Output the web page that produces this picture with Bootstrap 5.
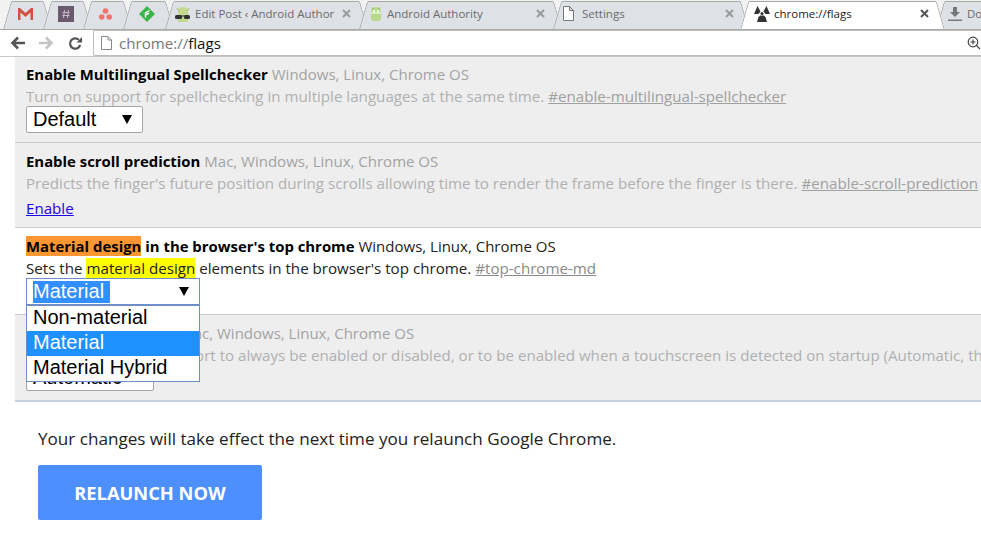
<!DOCTYPE html>
<html lang="en">
<head>
<meta charset="UTF-8">
<title>chrome://flags</title>
<link href="https://cdn.jsdelivr.net/npm/bootstrap@5.3.0/dist/css/bootstrap.min.css" rel="stylesheet">
<style>
html, body { height: 541px; overflow: hidden; }
body { background: #fff; font-family: "Open Sans", "Noto Sans", sans-serif; font-size: 15.15px; color: #000; }
.tabstrip { height: 30px; background: #f2f2f2; padding-left: 3px; padding-top: 1px; border-bottom: 1px solid #a9a9a9; overflow: hidden; }
.tabitem { position: relative; height: 28px; flex: none; color: #6b6b6b; font-size: 11.5px; white-space: nowrap; margin-right: -9px; }
.tabitem::before, .tabitem::after { content: ""; position: absolute; top: 0; bottom: 0; width: 10px; background: #dee1e6; border-top: 1px solid #a9a9a9; }
.tabitem::before { left: 0; border-left: 1px solid #a9a9a9; transform: skewX(-16deg); transform-origin: bottom left; border-top-left-radius: 3px; }
.tabitem::after { right: 0; border-right: 1px solid #a9a9a9; transform: skewX(16deg); transform-origin: bottom right; border-top-right-radius: 3px; }
.tabbody { position: relative; z-index: 1; height: 100%; background: #dee1e6; border-top: 1px solid #a9a9a9; margin: 0 9px; padding: 0 8px 4px 1px; }
.tabbody.pinned { padding-right: 5px; padding-bottom: 3px; }
.tw-pin { width: 49px; }
.tw-pinend { width: 51px; }
.tw-wide { width: 203px; }
.tw-set { width: 196px; }
.tw-set .tabbody { padding-right: 6px; }
.tw-on { width: 205px; }
.tw-dl { width: 70px; }
.tw-dl .tabbody { padding-left: 3px; gap: 5px; }
.tabitem.tab-on { z-index: 3; color: #222; }
.tabitem.tab-on::before, .tabitem.tab-on::after, .tabitem.tab-on .tabbody { background: #fff; }
.tabitem.tab-on { height: 29px; }
.tabitem.tab-on .tabbody { padding-left: 5px; padding-right: 7px; padding-bottom: 5px; }
.tab-x { margin-left: auto; flex: none; }
.tabname { overflow: hidden; flex: 1; }
.toolrow { height: 27px; background: #fff; border-bottom: 1px solid #c6c6c6; padding-left: 10px; }
.navbtn { margin-right: 14px; flex: none; }
.addrbox { height: 26px; margin-left: -4px; flex: 1; border: 1px solid #bdbdbd; border-right: 0; border-radius: 2px 0 0 2px; font-size: 15.1px; color: #767676; padding-left: 7px; }
.addrbox b { font-weight: 400; color: #111; }
.pageglyph { margin-right: 7px; }
.flaglist { margin-left: 15px; background: #eee; border-bottom: 2px solid #c5d0e0; }
.flagrow { padding: 7px 0 0 11px; border-bottom: 1px solid #ccc; line-height: 22px; white-space: nowrap; overflow: hidden; }
.row-a { height: 86px; padding-top: 6px; }
.row-b { height: 85px; }
.row-c { height: 87px; background: #fff; }
.row-d { height: 85px; border-bottom: 0; }
.flagname { font-weight: 700; font-size: 14.9px; }
.flagos { color: #a3a3a3; font-size: 15px; }
.flagdesc { color: #b0b0b0; }
.flagdesc u { color: #a0a0a0; }
.row-c .flagos, .row-c .flagdesc { color: #222; }
.row-c .flagdesc u { color: #8a8a8a; }
.hl-orange { background: #ff9632; }
.hl-yellow { background: #ff0; }
.fakeselect { display: flex; align-items: center; justify-content: space-between; height: 27px; border: 1px solid #a6a6a6; border-radius: 2px; background: #fff; font-family: "Liberation Sans", Arial, sans-serif; font-size: 20px; line-height: 23px; padding: 0 10px 0 6px; margin-top: -1px; }
.sel-default { width: 117px; }
.sel-auto { width: 128px; margin-top: -2px; }
.sel-open { width: 174px; border-color: #6d8fc9; border-radius: 0; padding-left: 6px; padding-bottom: 0; }
.sel-open span:first-child { background: #338fff; color: #fff; width: 77px; height: 22px; line-height: 21px; }
.arrowglyph { width: 0; height: 0; border-left: 5px solid transparent; border-right: 5px solid transparent; border-top: 9px solid #000; }
.enablelink { color: #2200e6; text-decoration: underline; display: inline-block; margin-top: 3px; }
.droplist { position: absolute; left: 11px; top: 77px; z-index: 5; width: 174px; background: #fff; border: 1px solid #6d8fc9; font-family: "Liberation Sans", Arial, sans-serif; font-size: 20px; line-height: 23px; }
.droplist div { padding-left: 6px; height: 25px; }
.droplist .picked { background: #1e90ff; color: #fff; }
.relaunchzone { margin-left: 38px; padding-top: 24px; font-size: 17.1px; line-height: 25px; color: #222; }
.relaunchbtn { width: 224px; height: 55px; margin-top: 14px; background: #4d8ffc; border: 0; border-radius: 2px; color: #fff; font-weight: 700; font-size: 18.3px; }
</style>
</head>
<body>
<div class="tabstrip d-flex">
  <div class="tabitem tw-pin"><div class="tabbody pinned d-flex align-items-center justify-content-center">
    <svg width="15" height="12" viewBox="0 0 15 12"><path d="M0 0h2l5.500 5L13 0h2v12h-2.500V4.500L7.500 9 2.500 4.500V12H0z" fill="#d5503f"/></svg></div></div>
  <div class="tabitem tw-pin"><div class="tabbody pinned d-flex align-items-center justify-content-center">
    <svg width="16" height="16" viewBox="0 0 16 16"><rect width="16" height="16" fill="#6b5a6e"/><path d="M6.500 4 5.500 12M10.500 4 9.500 12M4.500 6.500h7M4.500 9.500h7" stroke="#c9bcc8" stroke-width="1"/></svg></div></div>
  <div class="tabitem tw-pin"><div class="tabbody pinned d-flex align-items-center justify-content-center">
    <svg width="13" height="12" viewBox="0 0 13 12"><circle cx="6.500" cy="3" r="2.800" fill="#f0736c"/><circle cx="2.800" cy="9" r="2.800" fill="#f0736c"/><circle cx="10.200" cy="9" r="2.800" fill="#f0736c"/></svg></div></div>
  <div class="tabitem tw-pinend"><div class="tabbody pinned d-flex align-items-center justify-content-center">
    <svg width="16" height="16" viewBox="0 0 16 16"><path d="M8 0l8 8-8 8-8-8z" fill="#3ab54a"/><path d="M6.500 11.500V7L10.500 4.500M6.500 9.200l3.500-2" stroke="#fff" stroke-width="1.400" fill="none"/></svg></div></div>
  <div class="tabitem tw-wide"><div class="tabbody d-flex align-items-center gap-1">
    <svg width="16" height="16" viewBox="0 0 16 16"><path d="M3 16V6a5 5 0 0 1 10 0v10z" fill="#c3d98c"/><path d="M2 2l2 3M14 2l-2 3" stroke="#9dbb62"/><rect x="0" y="9" width="7" height="4" rx="1.500" fill="#333"/><rect x="9" y="9" width="6" height="4" rx="1.500" fill="#333"/><path d="M6 10h4" stroke="#333"/></svg>
    <span class="tabname">Edit Post ‹ Android Author</span>
    <svg class="tab-x" width="9" height="9" viewBox="0 0 9 9"><path d="M1 1l7 7M8 1 1 8" stroke="#9a9a9a" stroke-width="2"/></svg></div></div>
  <div class="tabitem tw-wide"><div class="tabbody d-flex align-items-center gap-1">
    <svg width="14" height="16" viewBox="0 0 14 16"><path d="M2 5a5 4 0 0 1 10 0v7a3 3 0 0 1-3 3H5a3 3 0 0 1-3-3z" fill="#b6d98a"/><path d="M3 1.500l1.500 2M11 1.500l-1.500 2" stroke="#8db55a"/><circle cx="5" cy="5" r="1" fill="#fff"/><circle cx="9" cy="5" r="1" fill="#fff"/><path d="M2 7h10" stroke="#fff"/></svg>
    <span class="tabname">Android Authority</span>
    <svg class="tab-x" width="9" height="9" viewBox="0 0 9 9"><path d="M1 1l7 7M8 1 1 8" stroke="#9a9a9a" stroke-width="2"/></svg></div></div>
  <div class="tabitem tw-set"><div class="tabbody d-flex align-items-center gap-1">
    <svg class="me-1" width="11" height="15" viewBox="0 0 11 15"><path d="M.5.500h6l4 4v10H.5zM6.500.500v4h4" fill="#fff" stroke="#777"/></svg>
    <span class="tabname">Settings</span>
    <svg class="tab-x" width="9" height="9" viewBox="0 0 9 9"><path d="M1 1l7 7M8 1 1 8" stroke="#9a9a9a" stroke-width="2"/></svg></div></div>
  <div class="tabitem tab-on tw-on"><div class="tabbody d-flex align-items-center gap-1">
    <svg width="16" height="16" viewBox="0 0 16 16"><path d="M3.500 0 6.500 5.500 4.500 8H0zM12.500 0 16 8h-4.500L9.500 5.500zM4.500 11l1.800-1.500h3.400L11.500 11 13 16H3z" fill="#333"/><circle cx="8" cy="7.500" r="1.500" fill="#333"/></svg>
    <span class="tabname">chrome://flags</span>
    <svg class="tab-x" width="9" height="9" viewBox="0 0 9 9"><path d="M1 1l7 7M8 1 1 8" stroke="#555" stroke-width="2"/></svg></div></div>
  <div class="tabitem tw-dl"><div class="tabbody d-flex align-items-center">
    <svg width="14" height="14" viewBox="0 0 14 14"><path d="M5 0h4v5h3L7 10 2 5h3zM0 12.500h14V14H0z" fill="#777"/></svg>
    <span>Do</span></div></div>
</div>
<div class="toolrow d-flex align-items-center">
  <svg class="navbtn" width="15" height="14" viewBox="0 0 15 14"><path d="M15 7H3M8 1.500 2.500 7 8 12.500" stroke="#555" stroke-width="2.600" fill="none"/></svg>
  <svg class="navbtn" width="15" height="14" viewBox="0 0 15 14"><path d="M0 7h12M7 1.500 12.500 7 7 12.500" stroke="#c4c4c4" stroke-width="2.600" fill="none"/></svg>
  <svg class="navbtn" width="15" height="15" viewBox="0 0 16 16"><path d="M13 9.500A5.500 5.500 0 1 1 11.500 4" stroke="#555" stroke-width="2.400" fill="none"/><path d="M9 7h6V1z" fill="#555"/></svg>
  <div class="addrbox d-flex align-items-center">
    <svg class="pageglyph" width="11" height="14" viewBox="0 0 11 14"><path d="M.5.500h6.500l3.500 3.500v9.500H.5zM7 .500V4h3.500" fill="#fff" stroke="#888"/></svg>
    <span>chrome://<b>flags</b></span>
    <svg class="ms-auto" width="14" height="14" viewBox="0 0 14 14"><circle cx="6" cy="6" r="4.800" fill="none" stroke="#444" stroke-width="1.200"/><path d="M3.500 6h5M6 3.500v5M9.500 9.500 13 13" stroke="#444" stroke-width="1.200"/></svg>
  </div>
</div>
<div class="flaglist">
  <div class="flagrow row-a">
    <div><span class="flagname">Enable Multilingual Spellchecker</span> <span class="flagos">Windows, Linux, Chrome OS</span></div>
    <div class="flagdesc">Turn on support for spellchecking in multiple languages at the same time. <u>#enable-multilingual-spellchecker</u></div>
    <div class="fakeselect sel-default"><span>Default</span><span class="arrowglyph"></span></div>
  </div>
  <div class="flagrow row-b">
    <div><span class="flagname">Enable scroll prediction</span> <span class="flagos">Mac, Windows, Linux, Chrome OS</span></div>
    <div class="flagdesc">Predicts the finger's future position during scrolls allowing time to render the frame before the finger is there. <u>#enable-scroll-prediction</u></div>
    <a class="enablelink" href="#">Enable</a>
  </div>
  <div class="position-relative">
    <div class="flagrow row-c">
      <div><span class="flagname"><span class="hl-orange">Material design</span> in the browser's top chrome</span> <span class="flagos">Windows, Linux, Chrome OS</span></div>
      <div class="flagdesc">Sets the <span class="hl-yellow">material design</span> elements in the browser's top chrome. <u>#top-chrome-md</u></div>
      <div class="fakeselect sel-open"><span>Material</span><span class="arrowglyph"></span></div>
    </div>
    <div class="droplist">
      <div>Non-material</div>
      <div class="picked">Material</div>
      <div>Material Hybrid</div>
    </div>
    <div class="flagrow row-d">
      <div><span class="flagname">Enable touch events</span> <span class="flagos">Mac, Windows, Linux, Chrome OS</span></div>
      <div class="flagdesc">Force touchscreen support to always be enabled or disabled, or to be enabled when a touchscreen is detected on startup (Automatic, the default).</div>
      <div class="fakeselect sel-auto"><span>Automatic</span><span class="arrowglyph"></span></div>
    </div>
  </div>
</div>
<div class="relaunchzone">
  <div>Your changes will take effect the next time you relaunch Google Chrome.</div>
  <button class="relaunchbtn btn" type="button">RELAUNCH NOW</button>
</div>
<script src="https://cdn.jsdelivr.net/npm/bootstrap@5.3.0/dist/js/bootstrap.bundle.min.js"></script>
</body>
</html>
